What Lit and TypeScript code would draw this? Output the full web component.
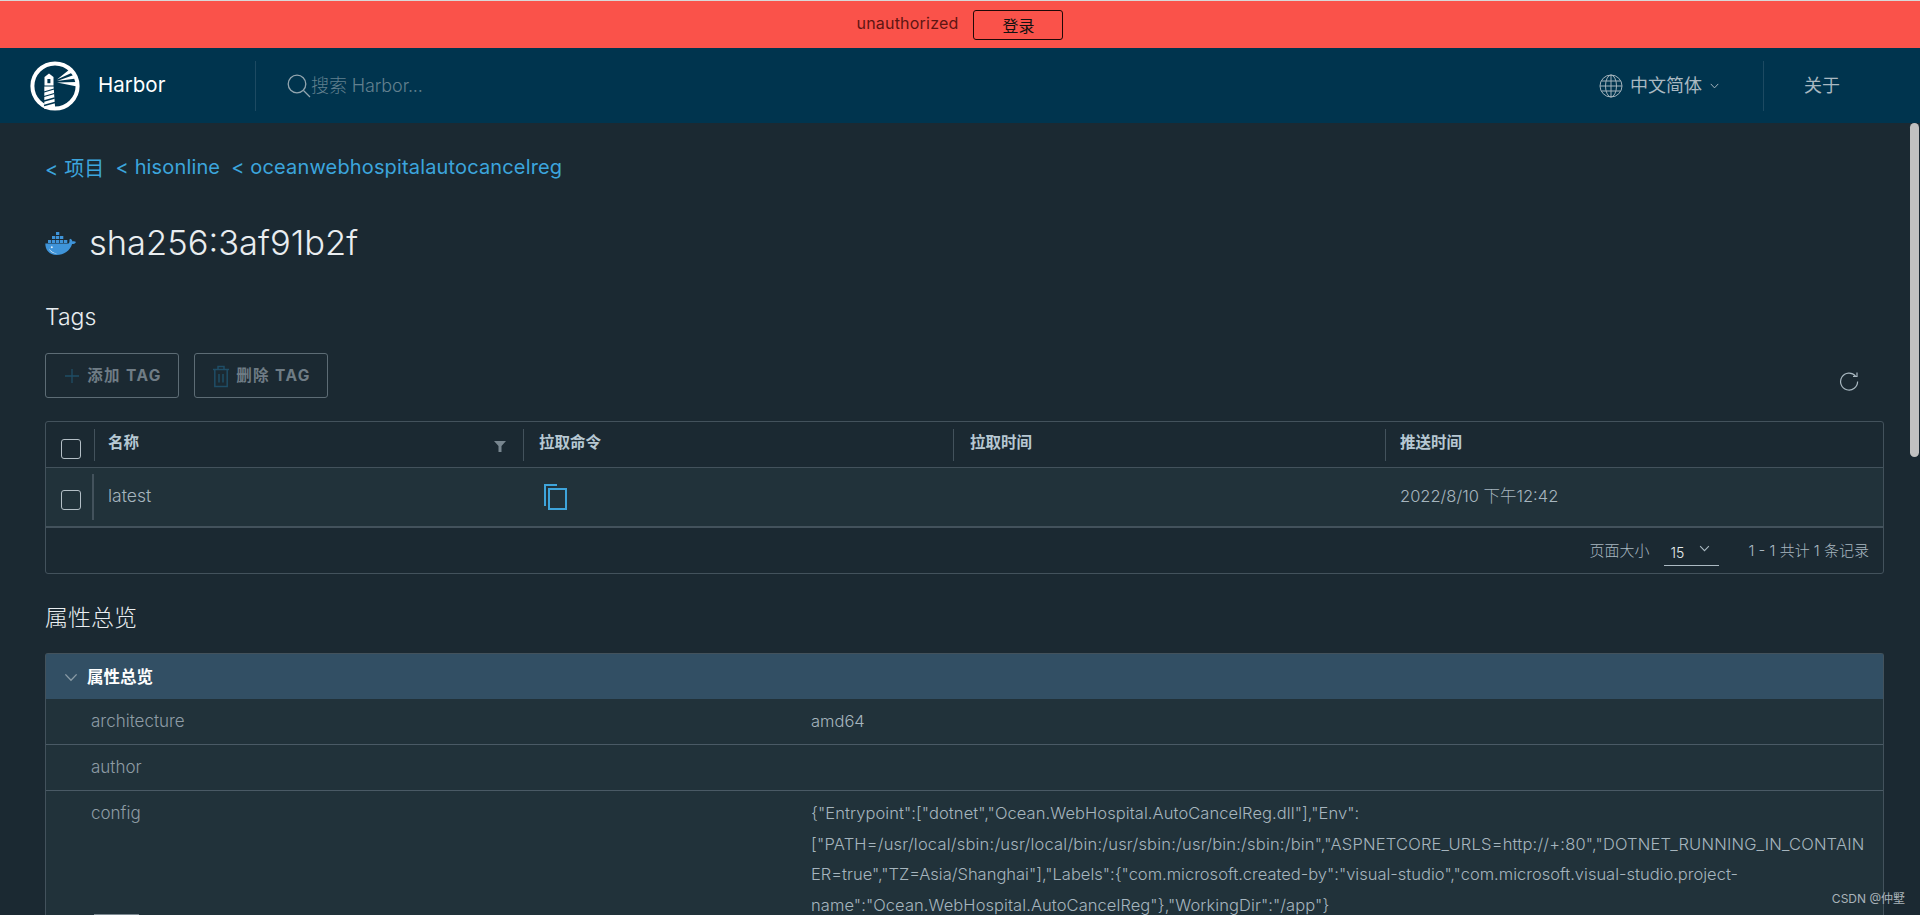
import { LitElement, html, css } from "lit";
import { customElement } from "lit/decorators.js";

const logo = html`<svg class="logo" viewBox="0 0 50 50">
  <circle cx="25" cy="25" r="22.6" fill="none" stroke="#fff" stroke-width="4"/>
  <path fill="#fff" d="M19 12.500 23.500 16V24.600H14.500V16Z"/>
  <rect x="17.400" y="18" width="3" height="4.200" fill="#00354f"/>
  <path fill="#fff" d="M14.300 25.600H23.600L25.200 48H14.300Z"/>
  <path stroke="#00354f" stroke-width="1.300" d="M14 31 24 28M14 35.500 24.400 32.500M14 40 24.700 37M14 44.500 25 41.500"/>
  <path fill="#fff" d="M27 18.500 39.500 8.500 42.500 11.500ZM27 20 44.500 13.800 46.300 17.600ZM27 21.600 47 21V25.600Z"/>
</svg>`;

const docker = html`<svg class="docker" viewBox="0 0 31 23">
  <path fill="#3f94d9" d="M.3 11.600H23.400c1-.6 1.300-2.200 1-4l1.300-.9c1 .8 1.600 1.700 1.800 2.700 1.300-.4 2.600-.2 3.500.5-.8 1.600-2.200 2.200-3.900 2.200C25 18.800 19 23 11.500 23 4.200 23 .3 18 .3 11.600Z"/>
  <path fill="#3f94d9" d="M3 8h3.300v3H3ZM7 8h3.300v3H7ZM11 8h3.300v3H11ZM15 8h3.300v3H15ZM19 8h3.300v3H19ZM7 4h3.300v3H7ZM11 4h3.300v3H11ZM15 4h3.300v3H15ZM11 0h3.300v3H11Z"/>
  <path fill="#dcebf7" d="M4 16.500c2 3.300 5 4.500 8 4.800-3.800.8-7-1.300-8-4.800Z"/>
  <circle cx="6.800" cy="15.300" r="1" fill="#dcebf7"/>
</svg>`;

const globe = html`<svg class="globe" viewBox="0 0 24 24" fill="none" stroke="#a3b3bc" stroke-width="1">
  <circle cx="12" cy="12" r="11"/><ellipse cx="12" cy="12" rx="5.500" ry="11"/>
  <path d="M12 1V23M2.200 7H21.800M1 12H23M2.200 17H21.800"/>
</svg>`;

const chevron = (cls: string) => html`<svg class=${cls} viewBox="0 0 12 8" fill="none" stroke="currentColor" stroke-width="1.200"><path d="M1 1.200 6 6.500 11 1.200"/></svg>`;

const configLines = [
  `{"Entrypoint":["dotnet","Ocean.WebHospital.AutoCancelReg.dll"],"Env":`,
  `["PATH=/usr/local/sbin:/usr/local/bin:/usr/sbin:/usr/bin:/sbin:/bin","ASPNETCORE_URLS=http://+:80","DOTNET_RUNNING_IN_CONTAIN`,
  `ER=true","TZ=Asia/Shanghai"],"Labels":{"com.microsoft.created-by":"visual-studio","com.microsoft.visual-studio.project-`,
  `name":"Ocean.WebHospital.AutoCancelReg"},"WorkingDir":"/app"}`,
];

@customElement("app-root")
export class AppRoot extends LitElement {
  static styles = css`
    :host {
      display: flex; flex-direction: column; height: 915px; overflow: hidden; position: relative;
      background: #1b2932; color: #acbac3;
      font-family: Inter, "Noto Sans CJK SC", sans-serif; font-weight: 300;
      box-sizing: border-box; border-top: 1px solid #d8d8d8;
    }
    .alert { height: 47px; flex: none; background: #fa524a; display: flex; align-items: center; justify-content: center; box-sizing: border-box; }
    .alert-text { font-size: 16px; color: #5e1512; font-weight: 400; letter-spacing: .2px; margin-bottom: 3px; }
    .alert-btn {
      margin-left: 15px; width: 90px; height: 30px; box-sizing: border-box; border: 1px solid #1f0807; border-radius: 3px;
      display: flex; align-items: center; justify-content: center; color: #111; font-size: 16px; margin-top: 1px; font-weight: 400;
    }
    .nav { height: 75px; flex: none; background: #00344e; display: flex; align-items: center; }
    .logo { width: 50px; height: 50px; margin-left: 30px; flex: none; }
    .brand { margin-left: 18px; width: 157px; color: #fff; font-size: 20.500px; font-weight: 400; margin-bottom: 2px; }
    .vdiv { width: 1px; height: 50px; background: #1d4a62; flex: none; }
    .search-ic { width: 24px; height: 24px; margin-left: 31px; flex: none; }
    .search { color: #62808f; font-size: 18px; flex: 1; font-weight: 300; letter-spacing: -.1px; margin-bottom: 3px; }
    .globe { width: 24px; height: 24px; flex: none; }
    .lang { font-size: 18px; margin-left: 7px; color: #a9b8c1; font-weight: 400; margin-bottom: 4px; }
    .lang-ch { width: 9px; height: 6px; margin-left: 8px; margin-right: 44px; color: #b4c1c9; flex: none; }
    .about { width: 36px; margin-left: 40px; margin-right: 80px; font-size: 18px; color: #a9b8c1; font-weight: 400; margin-bottom: 3px; }

    .main { flex: 1; min-height: 0; padding: 33px 36px 0 45px; overflow: hidden; }
    .crumbs { display: flex; height: 22px; align-items: center; font-size: 20px; color: #3ca5dd; gap: 11px; letter-spacing: .15px; font-weight: 400; }
    .title-row { display: flex; align-items: center; height: 44px; margin-top: 42px; }
    .docker { width: 31px; height: 23px; flex: none; margin-top: 2px; }
    h1 { margin: 0 0 0 13px; font-size: 34.500px; font-weight: 300; color: #e9edf0; }
    h2 { margin: 39px 0 0; font-size: 23px; height: 26px; line-height: 28px; font-weight: 300; color: #e9edf0; }
    h2.second { margin-top: 30px; height: 28px; line-height: 28px; }
    .toolbar { display: flex; align-items: flex-start; margin-top: 24px; height: 45px; }
    .btn {
      width: 134px; height: 45px; box-sizing: border-box; border: 1px solid #5d6c75; border-radius: 3px; margin-right: 15px;
      display: flex; align-items: center; justify-content: center; color: #6f7c85; font-size: 15.500px; font-weight: 700; letter-spacing: 1.400px;
    }
    .btn span { margin-bottom: 3px; }
    .btn svg { width: 20px; height: 24px; margin-right: 5px; flex: none; }
    .refresh { width: 20px; height: 20px; margin-left: auto; margin-top: 18px; margin-right: 25px; }

    .table { margin-top: 23px; height: 153px; border: 1px solid #43525c; border-radius: 3px; box-sizing: border-box; display: flex; flex-direction: column; }
    .thead { height: 46px; display: flex; flex: none; box-sizing: border-box; border-bottom: 1px solid #43525c; }
    .tbody { height: 60px; display: flex; flex: none; background: #21323a; box-sizing: border-box; border-bottom: 2px solid #43525c; }
    .cell { position: relative; display: flex; align-items: center; box-sizing: border-box; }
    .c0 { width: 48px; flex: none; padding-left: 15px; }
    .c1 { width: 429px; flex: none; padding-left: 14px; }
    .c2 { width: 430px; flex: none; padding-left: 16px; }
    .c3 { width: 432px; flex: none; padding-left: 17px; }
    .c4 { flex: 1; padding-left: 15px; }
    .thead .cell { padding-bottom: 6px; height: 44px; color: #b7c8d3; font-size: 15.500px; font-weight: 700; }
    .thead .cell.sep::before { content: ""; position: absolute; left: 0; top: 7px; height: 32px; width: 1px; background: #43525c; }
    .tbody .cell.sep0::before { content: ""; position: absolute; left: -2px; top: 6px; height: 46px; width: 2px; background: #43525c; }
    .tbody .cell { font-size: 16.500px; color: #a6b5be; padding-bottom: 5px; }
    .tbody .name { font-size: 17.500px; padding-bottom: 3px; }
    .check { width: 20px; height: 20px; box-sizing: border-box; border: 1px solid #b4bfc6; border-radius: 3px; flex: none; }
    .thead .c0 { padding-bottom: 0; padding-top: 8px; height: 45px; }
    .tbody .c0 { padding-top: 5px; padding-bottom: 0; }
    .filter { position: absolute; right: 17px; top: 19px; width: 12px; height: 11px; }
    .copy { width: 24px; height: 27px; margin: 3px 0 0 4px; }
    .tfoot { flex: 1; display: flex; align-items: center; justify-content: flex-end; font-size: 15px; color: #a9b8c1; padding-right: 14px; }
    .tfoot span { margin-bottom: 2px; }
    .select { position: relative; margin-left: 15px; margin-right: 29px; width: 55px; height: 30px; box-sizing: border-box; border-bottom: 1px solid #acbac3; color: #e9edf0; font-size: 14px; padding: 8px 0 0 6px; }
    .sel-ch { position: absolute; right: 9px; top: 9px; width: 11px; height: 7px; color: #a9b8c1; }

    .panel { margin-top: 21px; border: 1px solid #43525c; border-bottom: 0; border-radius: 3px 3px 0 0; box-sizing: border-box; height: 262px; background: #21323a; }
    .ph { height: 45px; background: #324f64; display: flex; align-items: center; color: #fff; font-size: 16.500px; font-weight: 700; }
    .ph-title { margin-bottom: 2px; }
    .ph-ch { width: 14px; height: 9px; color: #8b9ca6; margin: 1px 9px 0 18px; flex: none; }
    .pr { display: flex; box-sizing: border-box; border-bottom: 1px solid #4a5a65; font-size: 17px; line-height: 30.500px; min-height: 46px; padding-top: 7px; }
    .pr:last-child { border-bottom: 0; }
    .k { width: 765px; padding-left: 45px; box-sizing: border-box; flex: none; color: #8e9ca5; }
    .v { flex: 1; color: #a6b5be; min-width: 0; font-size: 16.500px; }
    .line { white-space: nowrap; letter-spacing: .07px; }
    .line.wide { letter-spacing: .2px; }
    .line.mid { letter-spacing: 0; }

    .thumb { position: absolute; right: 1px; top: 122px; width: 9px; height: 334px; border-radius: 5px; background: #c1c1c1; }
    .mark { position: absolute; right: 15px; bottom: 9px; font-size: 12px; color: #a9b3b9; font-weight: 400; }
    .stub { position: absolute; left: 94px; bottom: 0; width: 45px; height: 1px; background: #7d8a92; }
  `;

  render() {
    return html`
      <div class="alert">
        <span class="alert-text">unauthorized</span>
        <span class="alert-btn">登录</span>
      </div>
      <div class="nav">
        ${logo}
        <span class="brand">Harbor</span>
        <span class="vdiv"></span>
        <svg class="search-ic" viewBox="0 0 24 24" fill="none" stroke="#93a6b0" stroke-width="1.300"><circle cx="10" cy="10" r="8.800"/><path d="M16.500 16.500 23 23"/></svg>
        <span class="search">搜索 Harbor...</span>
        ${globe}
        <span class="lang">中文简体</span>
        ${chevron("lang-ch")}
        <span class="vdiv"></span>
        <span class="about">关于</span>
      </div>
      <div class="main">
        <div class="crumbs"><span>&lt; 项目</span><span>&lt; hisonline</span><span>&lt; oceanwebhospitalautocancelreg</span></div>
        <div class="title-row">${docker}<h1>sha256:3af91b2f</h1></div>
        <h2>Tags</h2>
        <div class="toolbar">
          <div class="btn"><svg viewBox="0 0 20 24" fill="none" stroke="#1f4d66" stroke-width="1.300"><path d="M10 5V19M3 12H17"/></svg><span>添加 TAG</span></div>
          <div class="btn"><svg viewBox="0 0 20 24" fill="none" stroke="#1f4d66" stroke-width="1.500"><path d="M2 5.500H18M7 5V2.500H13V5M3.800 6V22.500H16.200V6M8 10V18.500M12 10V18.500"/></svg><span>删除 TAG</span></div>
          <svg class="refresh" viewBox="0 0 20 20" fill="none" stroke="#a9b8c1" stroke-width="1.200"><path d="M16.500 5A8.500 8.500 0 1 0 18.600 10.500M18 1.500V5.500H14"/></svg>
        </div>
        <div class="table">
          <div class="thead">
            <div class="cell c0"><span class="check"></span></div>
            <div class="cell c1 sep">名称<svg class="filter" viewBox="0 0 12 11" fill="#78868f"><path d="M0 0H12L7.500 5V11H4.500V5Z"/></svg></div>
            <div class="cell c2 sep">拉取命令</div>
            <div class="cell c3 sep">拉取时间</div>
            <div class="cell c4 sep">推送时间</div>
          </div>
          <div class="tbody">
            <div class="cell c0"><span class="check"></span></div>
            <div class="cell c1 sep0 name">latest</div>
            <div class="cell c2"><svg class="copy" viewBox="0 0 24 27" fill="none" stroke="#3ea4da" stroke-width="2"><path d="M2 23V2H14"/><rect x="6" y="6" width="17" height="20"/></svg></div>
            <div class="cell c3"></div>
            <div class="cell c4">2022/8/10 下午12:42</div>
          </div>
          <div class="tfoot">
            <span>页面大小</span>
            <div class="select">15${chevron("sel-ch")}</div>
            <span>1 - 1 共计 1 条记录</span>
          </div>
        </div>
        <h2 class="second">属性总览</h2>
        <div class="panel">
          <div class="ph">${chevron("ph-ch")}<span class="ph-title">属性总览</span></div>
          <div class="pr"><div class="k">architecture</div><div class="v">amd64</div></div>
          <div class="pr"><div class="k">author</div><div class="v"></div></div>
          <div class="pr"><div class="k">config</div><div class="v">
            <div class="line">${configLines[0]}</div>
            <div class="line wide">${configLines[1]}</div>
            <div class="line mid">${configLines[2]}</div>
            <div class="line">${configLines[3]}</div>
          </div></div>
        </div>
      </div>
      <div class="thumb"></div>
      <div class="mark">CSDN @仲墅</div>
      <div class="stub"></div>
    `;
  }
}
